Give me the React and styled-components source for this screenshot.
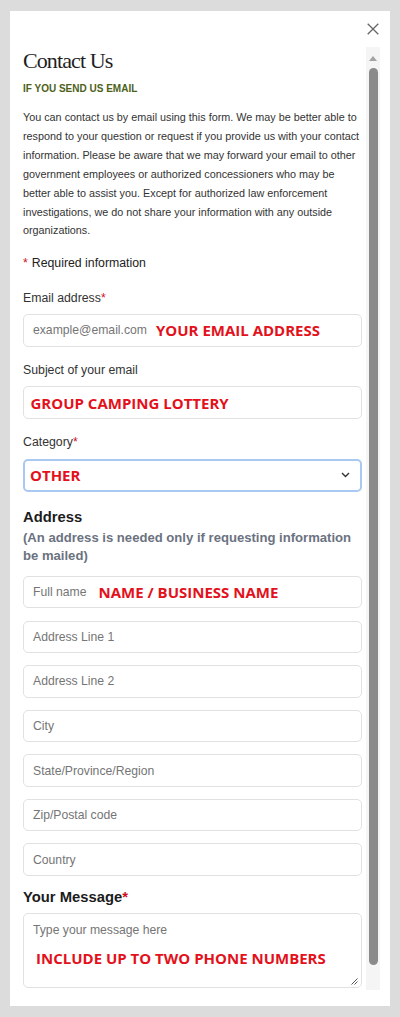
import React from 'react';
import styled, {createGlobalStyle} from 'styled-components';

const GlobalStyle = createGlobalStyle`
  body {
    margin: 0;
    background: #dcdcdc;
    font-family: 'Liberation Sans', Arial, sans-serif;
  }
`;

const Page = styled.div`
  padding: 11px 10px;
`;

const Panel = styled.div`
  box-sizing: border-box;
  height: 995px;
  background: #fff;
  display: flex;
  flex-direction: column;
  padding: 0 10px 16px 13px;
`;

const TopBar = styled.div`
  height: 36px;
  box-sizing: border-box;
  padding-top: 12px;
  display: flex;
  justify-content: flex-end;
  align-items: flex-start;
`;

const CloseButton = styled.button`
  border: 0;
  padding: 0;
  margin-right: 1px;
  background: none;
  width: 12px;
  height: 12px;
  display: flex;
  cursor: pointer;
`;

const Body = styled.div`
  flex: 1;
  min-height: 0;
  display: flex;
  gap: 4px;
`;

const Content = styled.div`
  flex: 1;
  min-width: 0;
  overflow: hidden;
  padding-top: 1px;
`;

const Scrollbar = styled.div`
  width: 14px;
  box-sizing: border-box;
  background: #f5f5f5;
  display: flex;
  flex-direction: column;
  align-items: center;
  padding: 9px 0 25px;
`;

const ScrollArrow = styled.div`
  width: 0;
  height: 0;
  border-left: 4.5px solid transparent;
  border-right: 4.5px solid transparent;
  border-bottom: 5px solid #a3a3a3;
`;

const ScrollThumb = styled.div`
  flex: 1;
  width: 9px;
  margin-top: 7px;
  background: #8b8b8b;
  border-radius: 4.5px;
`;

const Title = styled.h1`
  margin: 0;
  font-family: 'Liberation Serif', 'Times New Roman', serif;
  font-weight: 400;
  font-size: 22px;
  line-height: 26px;
  letter-spacing: -0.9px;
  color: #1f1f1f;
`;

const Eyebrow = styled.div`
  margin-top: 8px;
  font-size: 10px;
  line-height: 14px;
  font-weight: 700;
  color: #4d6119;
`;

const Intro = styled.p`
  margin: 12px 0 0;
  font-size: 10.8px;
  line-height: 18.9px;
  color: #333;
`;

const RequiredNote = styled.div`
  margin-top: 15px;
  font-size: 12.3px;
  line-height: 16px;
  color: #222;
`;

const Star = styled.span`
  color: #d0101b;
  margin-right: ${(p) => p.$space || 0}px;
`;

const Field = styled.div`
  margin-top: ${(p) => p.$top}px;
`;

const Label = styled.div`
  font-size: 12.3px;
  line-height: 16px;
  color: #333;
  margin-bottom: 8.5px;
`;

const InputBox = styled.div`
  box-sizing: border-box;
  height: 32.4px;
  border: 1px solid #e1e1e1;
  border-radius: 5px;
  display: flex;
  align-items: center;
  padding: 0 9px 0 ${(p) => p.$inset || 9}px;
`;

const SelectBox = styled.div`
  box-sizing: border-box;
  height: 33px;
  border: 2px solid #a9c8f2;
  border-radius: 5px;
  display: flex;
  align-items: center;
  justify-content: space-between;
  padding: 0 10px 0 5px;
`;

const Placeholder = styled.span`
  font-size: 12.2px;
  line-height: 16px;
  color: #757575;
  white-space: nowrap;
`;

const Annotation = styled.span`
  font-family: 'Open Sans', 'Liberation Sans', sans-serif;
  font-weight: 700;
  font-size: 15px;
  line-height: 20px;
  color: #e3111b;
  white-space: nowrap;
  margin-left: ${(p) => p.$offset || 0}px;
`;

const SectionTitle = styled.div`
  margin-top: ${(p) => p.$top}px;
  font-size: 14.8px;
  line-height: 18px;
  font-weight: 700;
  color: #1c1c1c;
`;

const SectionNote = styled.div`
  margin-top: 3px;
  font-size: 13.1px;
  line-height: 17.3px;
  font-weight: 700;
  color: #6b7280;
`;

const AddressList = styled.div`
  margin-top: 12px;
  display: flex;
  flex-direction: column;
  gap: 12.2px;
`;

const TextBox = styled.div`
  position: relative;
  box-sizing: border-box;
  margin-top: 7.5px;
  height: 74.4px;
  border: 1px solid #e1e1e1;
  border-radius: 5px;
  padding: 6px 9px;
`;

const MessageNote = styled(Annotation)`
  display: block;
  margin: 10px 0 0 3px;
`;

const Grip = styled.svg`
  position: absolute;
  right: 3px;
  bottom: 2px;
`;

const Chevron = () => (
  <svg width="9" height="6" viewBox="0 0 9 6">
    <path d="M1 1l3.5 3.5L8 1" fill="none" stroke="#333" strokeWidth="1.4" />
  </svg>
);

const addressFields = [
  {placeholder: 'Full name', note: 'NAME / BUSINESS NAME'},
  {placeholder: 'Address Line 1'},
  {placeholder: 'Address Line 2'},
  {placeholder: 'City'},
  {placeholder: 'State/Province/Region'},
  {placeholder: 'Zip/Postal code'},
  {placeholder: 'Country'},
];

const App = () => {
  return (
    <Page>
      <GlobalStyle />
      <Panel>
        <TopBar>
          <CloseButton aria-label="Close">
            <svg width="12" height="12" viewBox="0 0 12 12">
              <path d="M0.7 0.7L11.3 11.3M11.3 0.7L0.7 11.3" stroke="#666" strokeWidth="1.3" />
            </svg>
          </CloseButton>
        </TopBar>
        <Body>
          <Content>
            <Title>Contact Us</Title>
            <Eyebrow>IF YOU SEND US EMAIL</Eyebrow>
            <Intro>
              You can contact us by email using this form. We may be better able to
              respond to your question or request if you provide us with your contact
              information. Please be aware that we may forward your email to other
              government employees or authorized concessioners who may be better able to
              assist you. Except for authorized law enforcement investigations, we do not
              share your information with any outside organizations.
            </Intro>
            <RequiredNote>
              <Star $space={4}>*</Star>Required information
            </RequiredNote>

            <Field $top={18.4}>
              <Label>
                Email address<Star>*</Star>
              </Label>
              <InputBox>
                <Placeholder>example@email.com</Placeholder>
                <Annotation $offset={9}>YOUR EMAIL ADDRESS</Annotation>
              </InputBox>
            </Field>

            <Field $top={15.3}>
              <Label>Subject of your email</Label>
              <InputBox $inset={6.5}>
                <Annotation>GROUP CAMPING LOTTERY</Annotation>
              </InputBox>
            </Field>

            <Field $top={15.3}>
              <Label>
                Category<Star>*</Star>
              </Label>
              <SelectBox>
                <Annotation>OTHER</Annotation>
                <Chevron />
              </SelectBox>
            </Field>

            <SectionTitle $top={16.8}>Address</SectionTitle>
            <SectionNote>(An address is needed only if requesting information be mailed)</SectionNote>
            <AddressList>
              {addressFields.map((f) => (
                <InputBox key={f.placeholder}>
                  <Placeholder>{f.placeholder}</Placeholder>
                  {f.note && <Annotation $offset={12}>{f.note}</Annotation>}
                </InputBox>
              ))}
            </AddressList>

            <SectionTitle $top={12}>
              Your Message<Star>*</Star>
            </SectionTitle>
            <TextBox>
              <Placeholder>Type your message here</Placeholder>
              <MessageNote>INCLUDE UP TO TWO PHONE NUMBERS</MessageNote>
              <Grip width="7" height="7" viewBox="0 0 7 7">
                <path d="M6.5 0.5L0.5 6.5M6.5 3.5L3.5 6.5" stroke="#555" strokeWidth="1" />
              </Grip>
            </TextBox>
          </Content>
          <Scrollbar>
            <ScrollArrow />
            <ScrollThumb />
          </Scrollbar>
        </Body>
      </Panel>
    </Page>
  );
};

export default App;
